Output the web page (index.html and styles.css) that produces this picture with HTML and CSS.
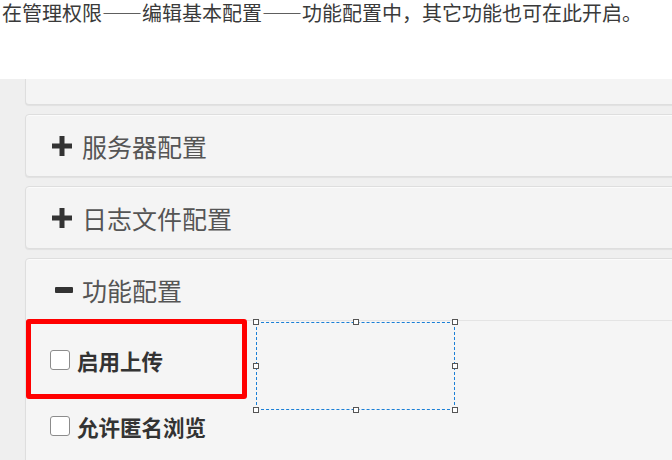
FILE: index.html
```html
<!DOCTYPE html>
<html lang="zh-CN">
<head>
<meta charset="utf-8">
<title>功能配置</title>
<link rel="stylesheet" href="styles.css">
</head>
<body>
<p class="intro">在管理权限——编辑基本配置——功能配置中，其它功能也可在此开启。</p>
<div class="frame">
  <div class="panel panel-cut"></div>
  <div class="panel">
    <div class="panel-head">
      <svg class="icon" viewBox="0 0 22 22"><path d="M8.5 1h5v7.5H21v5h-7.5V21h-5v-7.5H1v-5h7.5z" fill="#333"/></svg>
      <span>服务器配置</span>
    </div>
  </div>
  <div class="panel">
    <div class="panel-head">
      <svg class="icon" viewBox="0 0 22 22"><path d="M8.5 1h5v7.5H21v5h-7.5V21h-5v-7.5H1v-5h7.5z" fill="#333"/></svg>
      <span>日志文件配置</span>
    </div>
  </div>
  <div class="panel panel-open">
    <div class="panel-head">
      <svg class="icon" viewBox="0 0 22 22"><rect x="4" y="8" width="18" height="6" rx="1" fill="#333"/></svg>
      <span>功能配置</span>
    </div>
    <div class="panel-body">
      <label class="row"><input type="checkbox" class="check"><span>启用上传</span></label>
      <label class="row"><input type="checkbox" class="check"><span>允许匿名浏览</span></label>
      <div class="highlight"></div>
      <div class="selection">
        <i class="h h-tl"></i><i class="h h-tc"></i><i class="h h-tr"></i>
        <i class="h h-ml"></i><i class="h h-mr"></i>
        <i class="h h-bl"></i><i class="h h-bc"></i><i class="h h-br"></i>
      </div>
    </div>
  </div>
</div>
</body>
</html>
```
FILE: styles.css
```css
html, body {
  margin: 0;
  padding: 0;
  background: #fff;
  font-family: "Noto Sans CJK SC", "Microsoft YaHei", sans-serif;
}
.intro {
  margin: 0;
  padding-left: 2px;
  font-size: 20px;
  line-height: 26px;
  color: #3a3a3a;
}
.frame {
  margin-top: 53px;
  height: 381px;
  overflow: hidden;
  background: #efefef;
  padding-left: 25px;
  display: flex;
  flex-direction: column;
  gap: 9px;
}
.panel {
  flex: none;
  width: 700px;
  background: #f4f4f4;
  border: 1px solid #dedede;
  border-radius: 4px;
  box-shadow: inset 0 1px 0 #fbfbfb, 0 1px 1px rgba(0,0,0,0.06);
}
.panel-cut {
  height: 25px;
  border-top: none;
  border-radius: 0 0 4px 4px;
  box-shadow: 0 1px 1px rgba(0,0,0,0.06);
}
.panel-head {
  height: 61px;
  display: flex;
  align-items: center;
  padding-left: 25px;
  gap: 9px;
  font-size: 25px;
  color: #555;
}
.icon {
  width: 22px;
  height: 22px;
  flex: none;
}
.panel-open {
  background: #f5f5f5;
}
.panel-open .panel-head {
  border-bottom: 1px solid #e4e4e4;
}
.panel-body {
  position: relative;
  padding-top: 6px;
  height: 300px;
}
.row {
  height: 66px;
  display: flex;
  align-items: center;
  padding-left: 24px;
  gap: 7px;
  font-size: 21.5px;
  font-weight: bold;
  color: #333;
}
.check {
  appearance: none;
  -webkit-appearance: none;
  margin: 0;
  width: 20px;
  height: 20px;
  background: #fff;
  border: 1px solid #8c8c8c;
  border-radius: 3px;
  flex: none;
}
.highlight {
  position: absolute;
  left: 0;
  top: -2px;
  width: 211px;
  height: 70px;
  border: 5px solid #ff0000;
  border-radius: 3px;
}
.selection {
  position: absolute;
  left: 230px;
  top: 1px;
  width: 197px;
  height: 86px;
  border: 1px dashed #1a7fd6;
}
.h {
  position: absolute;
  width: 4px;
  height: 4px;
  background: #fff;
  border: 1px solid #555;
}
.h-tl { left: -4px; top: -4px; }
.h-tc { left: calc(50% - 3px); top: -4px; }
.h-tr { right: -4px; top: -4px; }
.h-ml { left: -4px; top: calc(50% - 3px); }
.h-mr { right: -4px; top: calc(50% - 3px); }
.h-bl { left: -4px; bottom: -4px; }
.h-bc { left: calc(50% - 3px); bottom: -4px; }
.h-br { right: -4px; bottom: -4px; }
```
